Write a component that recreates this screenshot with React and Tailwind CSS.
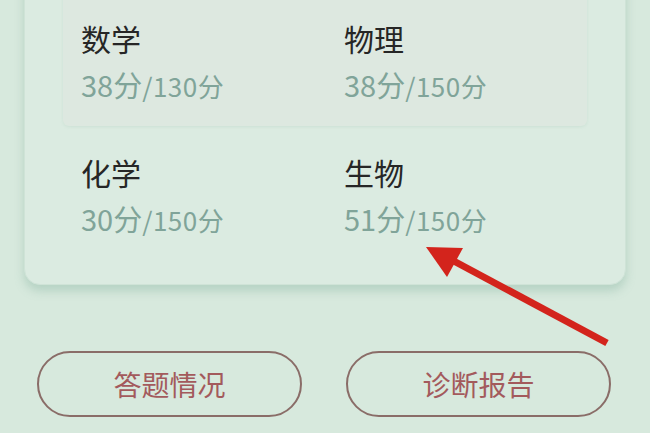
const SCORES = [
  [
    { subject: '数学', got: 38, total: 130 },
    { subject: '物理', got: 38, total: 150 },
  ],
  [
    { subject: '化学', got: 30, total: 150 },
    { subject: '生物', got: 51, total: 150 },
  ],
]

const font = { fontFamily: '"Noto Sans CJK SC", "Noto Sans", sans-serif' }

function ScoreCell({ subject, got, total }) {
  return (
    <div className="flex flex-col">
      <span className="text-[30px] leading-[36px] text-[#262626]">{subject}</span>
      <span className="mt-[10px] leading-[36px] text-[#80a499]">
        <span className="text-[29px]">{got}分</span>
        <span className="text-[26px] tracking-[0.5px]">/{total}分</span>
      </span>
    </div>
  )
}

function Arrow() {
  return (
    <svg className="absolute inset-0 pointer-events-none" width="650" height="433" viewBox="0 0 650 433">
      <line x1="607" y1="343" x2="450" y2="259" stroke="#d3241c" strokeWidth="7" strokeLinecap="butt" />
      <polygon points="426,247 463,248 447,277" fill="#d3241c" />
    </svg>
  )
}

export default function App() {
  return (
    <div className="relative w-[650px] h-[433px] overflow-hidden bg-[#d7e9dd]" style={font}>
      {/* score card */}
      <div className="mt-[-40px] mx-[24px] h-[325px] rounded-[16px] bg-[#dbebe1] border border-[#cfe3d7] shadow-[0_6px_10px_rgba(120,170,150,0.35)]">
        <div className="mx-[38px] h-[165px] pt-[59px] pl-[18px] rounded-b-[6px] bg-[#dde8e0] shadow-[0_1px_3px_rgba(150,190,170,0.2)] grid grid-cols-[263px_1fr]">
          {SCORES[0].map((s) => (
            <ScoreCell key={s.subject} {...s} />
          ))}
        </div>
        <div className="mt-[28px] pl-[56px] grid grid-cols-[263px_1fr]">
          {SCORES[1].map((s) => (
            <ScoreCell key={s.subject} {...s} />
          ))}
        </div>
      </div>

      {/* actions */}
      <div className="mt-[66px] pl-[37px] flex gap-[44px]">
        {['答题情况', '诊断报告'].map((label) => (
          <button
            key={label}
            className="w-[265px] h-[66px] rounded-full border-2 border-[#8a6d68] text-[28px] text-[#a35a5c] flex items-center justify-center"
          >
            {label}
          </button>
        ))}
      </div>

      <Arrow />
    </div>
  )
}
